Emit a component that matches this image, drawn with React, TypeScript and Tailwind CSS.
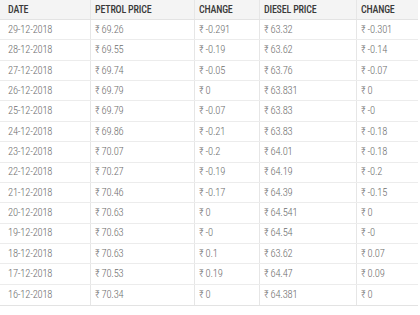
const rows: [string, string, string, string, string][] = [
  ['29-12-2018', '69.26', '-0.291', '63.32', '-0.301'],
  ['28-12-2018', '69.55', '-0.19', '63.62', '-0.14'],
  ['27-12-2018', '69.74', '-0.05', '63.76', '-0.07'],
  ['26-12-2018', '69.79', '0', '63.831', '0'],
  ['25-12-2018', '69.79', '-0.07', '63.83', '-0'],
  ['24-12-2018', '69.86', '-0.21', '63.83', '-0.18'],
  ['23-12-2018', '70.07', '-0.2', '64.01', '-0.18'],
  ['22-12-2018', '70.27', '-0.19', '64.19', '-0.2'],
  ['21-12-2018', '70.46', '-0.17', '64.39', '-0.15'],
  ['20-12-2018', '70.63', '0', '64.541', '0'],
  ['19-12-2018', '70.63', '-0', '64.54', '-0'],
  ['18-12-2018', '70.63', '0.1', '63.62', '0.07'],
  ['17-12-2018', '70.53', '0.19', '64.47', '0.09'],
  ['16-12-2018', '70.34', '0', '64.381', '0'],
];

const cols = 'grid grid-cols-[91px_104px_65px_97px_61px]';
const cell = 'flex items-center pl-1 border-r border-[#e6e6e6] last:border-r-0';

export default function App() {
  return (
    <div className="w-[420px] h-[315px] bg-white overflow-hidden" style={{ fontFamily: '"Liberation Sans Narrow", "Roboto Condensed", Roboto, sans-serif' }}>
      <div className="w-[418px] border-b border-[#e3e3e3]">
        <div className={`${cols} h-5 bg-[#f4f4f4] border-b border-[#e3e3e3] text-[10px] font-medium text-[#3a3a3a] tracking-[-0.2px]`}>
          <div className={`${cell} pl-2`}>DATE</div>
          <div className={cell}>PETROL PRICE</div>
          <div className={cell}>CHANGE</div>
          <div className={cell}>DIESEL PRICE</div>
          <div className={cell}>CHANGE</div>
        </div>
        {rows.map((r) => (
          <div key={r[0]} className={`${cols} h-[20.36px] border-b border-[#ececec] last:border-b-0 text-[10.5px] font-light text-[#6e6e6e] tracking-[-0.2px]`}>
            <div className={`${cell} pl-2`}>{r[0]}</div>
            <div className={cell}>₹ {r[1]}</div>
            <div className={cell}>₹ {r[2]}</div>
            <div className={cell}>₹ {r[3]}</div>
            <div className={cell}>₹ {r[4]}</div>
          </div>
        ))}
      </div>
    </div>
  );
}
